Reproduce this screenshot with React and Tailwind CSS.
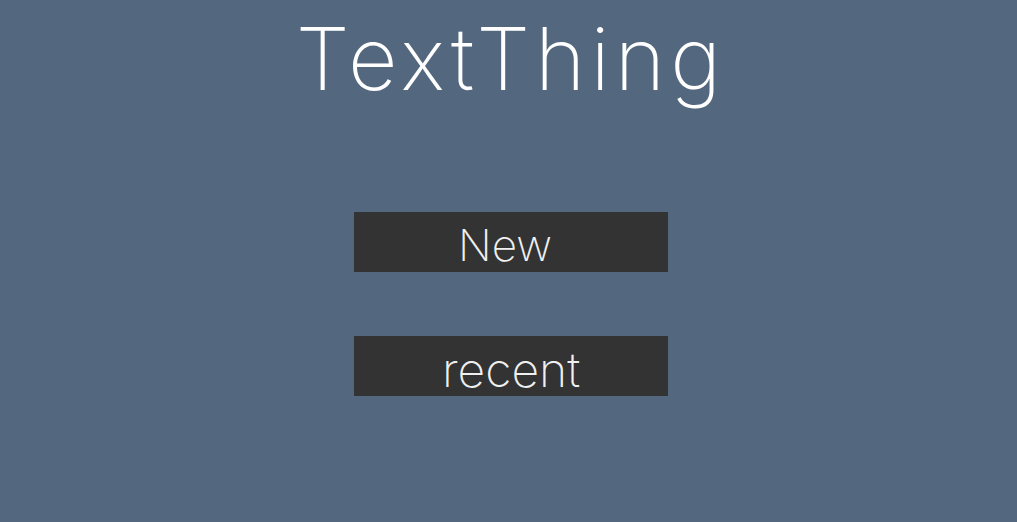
export default function App() {
  return (
    <div
      className="w-[1017px] h-[522px] bg-[#53677e] flex flex-col items-center pl-[5px] overflow-hidden"
      style={{ fontFamily: "Inter, 'Open Sans', sans-serif" }}
    >
      <div className="h-[212px] flex justify-center">
        <h1 className="text-white font-extralight text-[86px] leading-[1.2] mt-[8px] tracking-[5px] h-[104px]">TextThing</h1>
      </div>
      <button className="w-[314px] h-[60px] bg-[#333333] text-[#f0f0f0] font-extralight text-[44px] leading-none flex items-center justify-center pr-[12px] pt-[6px]">
        New
      </button>
      <button className="mt-[64px] w-[314px] h-[60px] bg-[#333333] text-[#f0f0f0] font-extralight text-[48px] leading-none flex items-center justify-center pt-[8px]">
        recent
      </button>
    </div>
  );
}
